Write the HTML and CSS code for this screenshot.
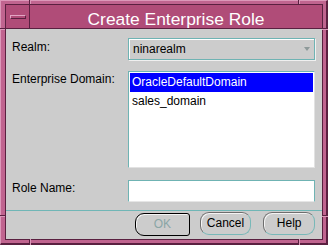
FILE: index.html
```html
<!DOCTYPE html>
<html>
<head>
<meta charset="utf-8">
<link rel="stylesheet" href="styles.css">
</head>
<body>
<div class="frame">
  <span class="mark v top left"></span>
  <span class="mark v top right"></span>
  <span class="mark v bottom left"></span>
  <span class="mark v bottom right"></span>
  <span class="mark h side-l upper"></span>
  <span class="mark h side-l lower"></span>
  <span class="mark h side-r upper"></span>
  <span class="mark h side-r lower"></span>
  <div class="win">
    <div class="titlebar">
      <div class="menubtn"><span class="menubar"></span></div>
      <div class="title">Create Enterprise Role</div>
    </div>
    <div class="content">
      <div class="form">
        <div class="lbl lbl-realm">Realm:</div>
        <div class="combo"><span class="combo-text">ninarealm</span><span class="arrow"></span></div>
        <div class="lbl lbl-domain">Enterprise Domain:</div>
        <div class="list">
          <div class="item sel">OracleDefaultDomain</div>
          <div class="item">sales_domain</div>
        </div>
        <div class="lbl lbl-role">Role Name:</div>
        <div class="field"></div>
      </div>
      <div class="sep"></div>
      <div class="buttons">
        <div class="btn btn-ok">OK</div>
        <div class="btn btn-cancel">Cancel</div>
        <div class="btn btn-help">Help</div>
      </div>
    </div>
  </div>
</div>
</body>
</html>
```

FILE: styles.css
```css
html, body {
  margin: 0;
  padding: 0;
  background: #cccccc;
}

body {
  font-family: "Liberation Sans", Arial, sans-serif;
  font-size: 12px;
  color: #000;
}

.frame {
  position: relative;
  width: 328px;
  height: 245px;
  box-sizing: border-box;
  background: #c0648f;
  border-top: 1px solid #dc98b9;
  border-left: 1px solid #dc98b9;
  border-right: 2px solid #5a2040;
  border-bottom: 2px solid #5a2040;
  padding: 3px 3px 3px 4px;
}

.mark {
  position: absolute;
  background: #5a2040;
}

.mark.v {
  width: 1px;
  height: 4px;
  border-right: 1px solid #dc98b9;
}

.mark.v.top { top: -1px; }
.mark.v.bottom { bottom: -2px; height: 6px; }
.mark.v.left { left: 28px; }
.mark.v.right { left: 297px; }

.mark.h {
  height: 1px;
  border-bottom: 1px solid #dc98b9;
}

.mark.h.side-l { left: -1px; width: 5px; }
.mark.h.side-r { right: -2px; width: 6px; }
.mark.h.upper { top: 27px; }
.mark.h.lower { top: 214px; }

.win {
  width: 318px;
  height: 236px;
  box-sizing: border-box;
  border: 1px solid #5a2040;
  display: flex;
  flex-direction: column;
}

.titlebar {
  height: 23px;
  flex: 0 0 23px;
  border-bottom: 1px solid #5a2040;
  background: #b04c78;
  display: flex;
}

.menubtn {
  width: 23px;
  height: 23px;
  border-right: 1px solid #5a2040;
  display: flex;
  align-items: center;
  justify-content: center;
}

.menubar {
  display: block;
  width: 14px;
  height: 2px;
  margin: 1px 0 0 1px;
  border-top: 1px solid #e3a6c4;
  border-left: 1px solid #e3a6c4;
  border-right: 1px solid #5a2040;
  border-bottom: 1px solid #5a2040;
  background: #b04c78;
}

.title {
  flex: 1;
  height: 23px;
  text-align: center;
  color: #ffffff;
  font-size: 17.4px;
  line-height: 28px;
  white-space: nowrap;
}

.content {
  flex: 1;
  background: #cccccc;
  padding: 9px 7px 0 6px;
  display: flex;
  flex-direction: column;
}

.form {
  display: grid;
  grid-template-columns: 116px 187px;
  grid-template-rows: 22px 97px 23px;
  row-gap: 11px;
}

.lbl {
  line-height: 14px;
  white-space: nowrap;
}

.lbl-realm { padding-top: 2px; }
.lbl-domain { padding-top: 1px; }
.lbl-role { padding-top: 2px; }

.combo {
  position: relative;
  box-sizing: border-box;
  height: 22px;
  border: 1px solid #6fb3b3;
  box-shadow: inset 1px 1px 0 #ffffff, 1px 1px 0 #f0f0f0;
  background: #cccccc;
  padding: 1px 0 0 4px;
  line-height: 19px;
}

.arrow {
  position: absolute;
  right: 4px;
  top: 8px;
  width: 0;
  height: 0;
  border-left: 3.5px solid transparent;
  border-right: 3.5px solid transparent;
  border-top: 4px solid #8e9a9a;
}

.list {
  box-sizing: border-box;
  height: 97px;
  background: #ffffff;
  border-top: 1px solid #6fb3b3;
  border-left: 1px solid #6fb3b3;
  border-right: 1px solid #e2e2e2;
  border-bottom: 1px solid #e2e2e2;
  padding: 1px;
}

.item {
  height: 19px;
  line-height: 19px;
  padding-left: 2px;
  white-space: nowrap;
}

.item.sel {
  background: #0000ff;
  color: #ffffff;
}

.field {
  box-sizing: border-box;
  height: 22px;
  margin-top: 1px;
  background: #ffffff;
  border-top: 1px solid #6fb3b3;
  border-left: 1px solid #6fb3b3;
  border-right: 1px solid #6fb3b3;
  border-bottom: 1px solid #e6e6e6;
}

.sep {
  height: 1px;
  margin: 8px -7px 0 -6px;
  background: #70b6b6;
}

.buttons {
  display: flex;
  align-items: flex-start;
  padding-top: 1px;
}

.btn {
  box-sizing: border-box;
  height: 23px;
  line-height: 21px;
  text-align: center;
  background: #cccccc;
  border: 1px solid;
  border-color: #6e6e6e #78b8b8 #78b8b8 #6e6e6e;
  box-shadow: inset 1px 1px 0 #f4f4f4;
  border-radius: 9px;
  white-space: nowrap;
}

.btn-ok {
  width: 55px;
  margin-left: 123px;
  margin-top: 1px;
  border-color: #000000;
  border-radius: 9px 3px 3px 9px;
  color: #8aa6a6;
}

.btn-cancel {
  width: 52px;
  margin-left: 10px;
}

.btn-help {
  width: 52px;
  margin-left: 12px;
}
```
